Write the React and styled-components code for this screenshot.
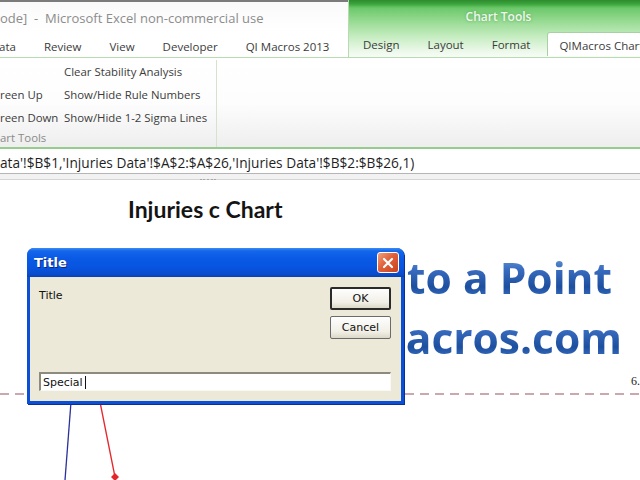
import React from 'react'
import styled, { createGlobalStyle } from 'styled-components'

const Global = createGlobalStyle`
  html, body { margin: 0; padding: 0; background: #fff; }
  body { font-family: "Open Sans", "Noto Sans", sans-serif; }
`

const Screen = styled.div`
  position: relative;
  width: 640px;
  height: 480px;
  overflow: hidden;
  display: flex;
  flex-direction: column;
  background: #fff;
`

const Header = styled.div`
  display: flex;
  height: 57px;
  flex: none;
`

const AppSide = styled.div`
  flex: none;
  width: 348px;
  display: flex;
  flex-direction: column;
  border-top: 2px solid #7b7b7b;
  background: linear-gradient(to bottom, #fafafa, #ffffff 30px, #ffffff);
`

const ContextSide = styled.div`
  flex: 1;
  min-width: 0;
  overflow: hidden;
  display: flex;
  flex-direction: column;
  background: linear-gradient(to bottom, #2f8a2f 0, #3aa43a 4px, #6cc86a 8px, #93d98f 20px, #c4ecbf 36px, #eef9ec 52px, #f7fcf6 57px);
  border-left: 1px solid #b9d9b4;
`

const TitleText = styled.div`
  height: 32px;
  display: flex;
  align-items: center;
  padding-left: ${p => p.$pad || 0}px;
  justify-content: ${p => p.$center ? 'center' : 'flex-start'};
  font-size: ${p => p.$size || 13}px;
  color: ${p => p.$color || '#8c8c8c'};
  white-space: nowrap;
  text-shadow: ${p => p.$glow ? '0 0 3px #5aa85a' : 'none'};
  font-weight: ${p => p.$bold ? 600 : 400};
`

const TabRow = styled.div`
  display: flex;
  align-items: flex-end;
  height: 23px;
  margin-left: ${p => p.$shift || 0}px;
`

const Tab = styled.div`
  height: 23px;
  padding: 0 14px;
  display: flex;
  align-items: center;
  padding-top: 1px;
  box-sizing: border-box;
  font-size: 11.5px;
  color: #3b3b3b;
  white-space: nowrap;
  ${p => p.$active && `
    background: #ffffff;
    border: 1px solid #a9cfa4;
    border-bottom: none;
    border-radius: 3px 3px 0 0;
    padding: 1px 11px 0;
    margin-left: 3px;
    height: 24px;
    margin-bottom: -1px;
  `}
`

const Ribbon = styled.div`
  height: 92px;
  flex: none;
  box-sizing: border-box;
  border-top: 1px solid #b7dcb1;
  border-bottom: 2px solid #95cd8f;
  background: linear-gradient(to bottom, #ffffff, #fdfdfd 50%, #eeeeee);
  display: flex;
`

const Group = styled.div`
  width: 216px;
  display: flex;
  flex-direction: column;
  border-right: 1px solid #d3e3d0;
  margin-top: 2px;
`

const GroupBody = styled.div`
  display: flex;
  flex: 1;
`

const Column = styled.div`
  display: flex;
  flex-direction: column;
  width: ${p => p.$w}px;
  padding-top: ${p => p.$top || 0}px;
`

const Command = styled.div`
  height: 23px;
  display: flex;
  align-items: center;
  font-size: 11.4px;
  color: #3c3c3c;
  white-space: nowrap;
`

const GroupLabel = styled.div`
  height: 20px;
  font-size: 11.4px;
  color: #8a8a8a;
  display: flex;
  align-items: center;
  white-space: nowrap;
  margin-bottom: 2px;
`

const FormulaBar = styled.div`
  height: 24px;
  flex: none;
  box-sizing: border-box;
  padding-top: 3px;
  display: flex;
  align-items: center;
  font-size: 13.7px;
  color: #1f1f1f;
  white-space: nowrap;
  background: #fff;
`

const Splitter = styled.div`
  height: 7px;
  flex: none;
  box-sizing: border-box;
  border-top: 1px solid #b5b5b5;
  border-bottom: 1px solid #d4d4d4;
  background: #f2f2f2;
  display: flex;
  padding-left: 200px;
`

const Grip = styled.div`
  width: 16px;
  margin-top: 5px;
  border-top: 2px dotted #a8a8a8;
`

const Sheet = styled.div`
  position: relative;
  flex: 1;
  background: #fff;
`

const ChartTitle = styled.div`
  position: absolute;
  left: 128px;
  top: 15px;
  font-family: Lato, "Open Sans", sans-serif;
  font-weight: 700;
  font-size: 23px;
  color: #141414;
  white-space: nowrap;
`

const Watermark = styled.div`
  position: absolute;
  right: 0;
  top: 68px;
  display: flex;
  flex-direction: column;
  align-items: flex-end;
  font-family: "Open Sans", sans-serif;
  font-weight: 700;
`

const WaterLine = styled.div`
  font-size: 42.5px;
  line-height: 60px;
  padding-right: ${p => p.$pad}px;
  white-space: nowrap;
  background: linear-gradient(to bottom, #86afe2 0%, #3a6dc0 35%, #1d4f9f 65%, #3b70c2 85%, #6a98d8 100%);
  -webkit-background-clip: text;
  background-clip: text;
  color: transparent;
`

const CenterLine = styled.div`
  position: absolute;
  left: 0;
  right: 0;
  top: 213px;
  height: 2px;
  background: repeating-linear-gradient(to right, #cba7ae 0 9px, transparent 9px 15px);
`

const AxisValue = styled.div`
  position: absolute;
  left: 631px;
  top: 194px;
  font-family: "Liberation Serif", serif;
  font-size: 12px;
  color: #222;
`

const Plot = styled.svg`
  position: absolute;
  left: 0;
  top: 0;
`

/* XP style input dialog */
const Dialog = styled.div`
  position: absolute;
  left: 27px;
  top: 248px;
  width: 377px;
  height: 156px;
  display: flex;
  flex-direction: column;
  border-radius: 7px 7px 0 0;
  background: #0b4fd4;
  box-shadow: 1px 1px 0 #0a2f9a;
  font-family: Tahoma, "DejaVu Sans", sans-serif;
`

const DialogTitle = styled.div`
  height: 29px;
  flex: none;
  display: flex;
  align-items: center;
  justify-content: space-between;
  padding: 0 5px 0 7px;
  border-radius: 7px 7px 0 0;
  background: linear-gradient(to bottom, #3b8cf5 0, #1466ea 3px, #0a5ae6 10px, #0754df 20px, #0a4ccd 26px, #0841b6 29px);
  color: #fff;
  font-size: 13px;
  font-weight: 700;
  text-shadow: 1px 1px 0 #0a2a80;
`

const CloseBtn = styled.div`
  width: 20px;
  height: 19px;
  border: 1px solid #fff;
  border-radius: 3px;
  background: linear-gradient(135deg, #f2a07e 0%, #e0603a 45%, #c9421c 100%);
  display: flex;
  align-items: center;
  justify-content: center;
`

const DialogBody = styled.div`
  flex: 1;
  margin: 0 3px 3px;
  background: #ece9d8;
  display: flex;
  flex-direction: column;
  padding: 10px 10px 10px 9px;
`

const BodyTop = styled.div`
  display: flex;
  justify-content: space-between;
  flex: 1;
`

const Prompt = styled.div`
  font-size: 11px;
  color: #111;
  padding-top: 2px;
`

const Buttons = styled.div`
  display: flex;
  flex-direction: column;
  gap: 6px;
`

const XpButton = styled.div`
  width: 61px;
  height: 23px;
  box-sizing: border-box;
  border: ${p => p.$default ? '2px solid #2a2a2a' : '1px solid #6b6b6b'};
  border-radius: 2px;
  background: linear-gradient(to bottom, #fefefe, #f1efe6 70%, #dcd8c8);
  display: flex;
  align-items: center;
  justify-content: center;
  font-size: 11px;
  color: #111;
`

const InputBox = styled.div`
  height: 19px;
  box-sizing: border-box;
  border-top: 2px solid #8d8a7e;
  border-left: 2px solid #8d8a7e;
  border-right: 1px solid #f8f8f4;
  border-bottom: 1px solid #f8f8f4;
  background: #fff;
  display: flex;
  align-items: center;
  padding-left: 2px;
  font-size: 11px;
  color: #111;
`

const Caret = styled.span`
  display: inline-block;
  width: 1px;
  height: 13px;
  background: #111;
  margin-left: 2px;
`

export default function App() {
  return (
    <Screen>
      <Global />
      <Header>
        <AppSide>
          <TitleText>ode]&nbsp; -&nbsp; Microsoft Excel non-commercial use</TitleText>
          <TabRow $shift={-15}>
            <Tab>ata</Tab>
            <Tab>Review</Tab>
            <Tab>View</Tab>
            <Tab>Developer</Tab>
            <Tab>QI Macros 2013</Tab>
          </TabRow>
        </AppSide>
        <ContextSide>
          <TitleText $center $pad={8} $size={12} $color="#eef7ec" $glow $bold>Chart Tools</TitleText>
          <TabRow>
            <Tab>Design</Tab>
            <Tab>Layout</Tab>
            <Tab>Format</Tab>
            <Tab $active>QIMacros Chart</Tab>
          </TabRow>
        </ContextSide>
      </Header>

      <Ribbon>
        <Group>
          <GroupBody>
            <Column $w={64} $top={23}>
              <Command>reen Up</Command>
              <Command>reen Down</Command>
            </Column>
            <Column $w={150}>
              <Command>Clear Stability Analysis</Command>
              <Command>Show/Hide Rule Numbers</Command>
              <Command>Show/Hide 1-2 Sigma Lines</Command>
            </Column>
          </GroupBody>
          <GroupLabel>art Tools</GroupLabel>
        </Group>
      </Ribbon>

      <FormulaBar>ata'!$B$1,'Injuries Data'!$A$2:$A$26,'Injuries Data'!$B$2:$B$26,1)</FormulaBar>
      <Splitter><Grip /></Splitter>

      <Sheet>
        <ChartTitle>Injuries c Chart</ChartTitle>
        <Watermark>
          <WaterLine $pad={28}>Get to a Point</WaterLine>
          <WaterLine $pad={18}>www.qimacros.com</WaterLine>
        </Watermark>
        <CenterLine />
        <AxisValue>6.</AxisValue>
        <Plot width="640" height="300" viewBox="0 0 640 300">
          <line x1="71" y1="222" x2="65" y2="300" stroke="#28309a" strokeWidth="1.3" />
          <line x1="100" y1="222" x2="115" y2="297" stroke="#e4262a" strokeWidth="1.3" />
          <path d="M115 293 L119 297 L115 301 L111 297 Z" fill="#e4262a" />
        </Plot>
      </Sheet>

      <Dialog>
        <DialogTitle>
          <span>Title</span>
          <CloseBtn>
            <svg width="12" height="12" viewBox="0 0 12 12">
              <path d="M2 2 L10 10 M10 2 L2 10" stroke="#fff" strokeWidth="2.2" strokeLinecap="round" />
            </svg>
          </CloseBtn>
        </DialogTitle>
        <DialogBody>
          <BodyTop>
            <Prompt>Title</Prompt>
            <Buttons>
              <XpButton $default>OK</XpButton>
              <XpButton>Cancel</XpButton>
            </Buttons>
          </BodyTop>
          <InputBox>Special<Caret /></InputBox>
        </DialogBody>
      </Dialog>
    </Screen>
  )
}
